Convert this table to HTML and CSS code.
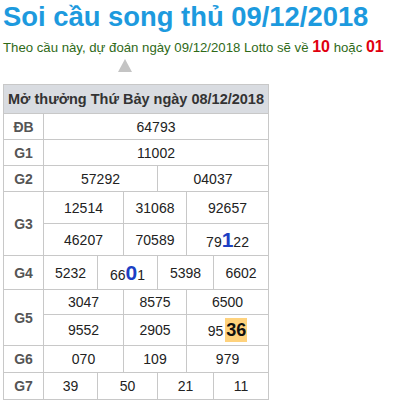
FILE: index.html
```html
<!DOCTYPE html>
<html lang="vi">
<head>
<meta charset="utf-8">
<title>Soi cầu song thủ 09/12/2018</title>
<link rel="stylesheet" href="styles.css">
</head>
<body>
<div class="page">
  <h1 class="title">Soi cầu song thủ 09/12/2018</h1>
  <p class="lead">Theo cầu này, dự đoán ngày 09/12/2018 Lotto sẽ về <b class="hot">10</b> hoặc <b class="hot">01</b></p>
  <div class="pointer"></div>
  <table class="kq">
    <colgroup>
      <col class="c0"><col class="c1"><col class="c2"><col class="c3"><col class="c4"><col class="c5"><col class="c6">
    </colgroup>
    <tr class="head"><th colspan="7">Mở thưởng Thứ Bảy ngày 08/12/2018</th></tr>
    <tr class="r"><td class="lb">ĐB</td><td colspan="6">64793</td></tr>
    <tr class="r"><td class="lb">G1</td><td colspan="6">11002</td></tr>
    <tr class="r"><td class="lb">G2</td><td colspan="3">57292</td><td colspan="3">04037</td></tr>
    <tr class="rb"><td class="lb" rowspan="2">G3</td><td colspan="2">12514</td><td colspan="2">31068</td><td colspan="2">92657</td></tr>
    <tr class="rb"><td colspan="2">46207</td><td colspan="2">70589</td><td colspan="2">79<span class="big">1</span>22</td></tr>
    <tr class="rg4"><td class="lb">G4</td><td>5232</td><td colspan="2">66<span class="big">0</span>1</td><td colspan="2">5398</td><td>6602</td></tr>
    <tr class="r5a"><td class="lb" rowspan="2">G5</td><td colspan="2">3047</td><td colspan="2">8575</td><td colspan="2">6500</td></tr>
    <tr class="r5b"><td colspan="2">9552</td><td colspan="2">2905</td><td colspan="2">95<span class="mark">36</span></td></tr>
    <tr class="r6"><td class="lb">G6</td><td colspan="2">070</td><td colspan="2">109</td><td colspan="2">979</td></tr>
    <tr class="r6"><td class="lb">G7</td><td>39</td><td colspan="2">50</td><td colspan="2">21</td><td>11</td></tr>
  </table>
</div>
</body>
</html>
```
FILE: styles.css
```css
html, body {
  margin: 0;
  padding: 0;
  background: #fff;
}
.page {
  padding: 0 0 0 3px;
  font-family: "Liberation Sans", Arial, sans-serif;
}
.title {
  margin: 0;
  padding-top: 1px;
  font-size: 27.4px;
  line-height: 32px;
  font-weight: bold;
  color: #1d9ade;
}
.lead {
  margin: 5px 0 0;
  font-size: 13.2px;
  line-height: 18px;
  color: #2f6a18;
}
.hot {
  color: #e0000f;
  font-size: 16px;
}
.pointer {
  width: 0;
  height: 0;
  margin: 2px 0 0 115px;
  border-left: 7px solid transparent;
  border-right: 7px solid transparent;
  border-bottom: 13px solid #c4c4c4;
}
.kq {
  margin-top: 12px;
  border-collapse: collapse;
  table-layout: fixed;
  width: 266px;
  font-size: 14px;
  color: #222;
  box-shadow: 0 1px 0 #b9b9b9;
}
.c0 { width: 40px; }
.c1 { width: 54px; }
.c2 { width: 26px; }
.c3 { width: 34px; }
.c4 { width: 29px; }
.c5 { width: 27px; }
.c6 { width: 55px; }
.kq th, .kq td {
  border: 1px solid #c8c8c8;
  padding: 0;
  text-align: center;
  white-space: nowrap;
}
.kq th {
  background: #d9dce1;
  color: #333;
  font-size: 14.5px;
  font-weight: bold;
  height: 28px;
}
.kq td { height: 25px; }
.kq .rb td { height: 31px; }
.kq .rg4 td { height: 33px; }
.kq .r5a td { height: 24px; }
.kq .r5b td { height: 30px; }
.kq .r6 td { height: 26px; }
.kq td.lb {
  font-weight: bold;
  color: #555;
}
.big {
  color: #1c3fc4;
  font-weight: bold;
  font-size: 21px;
}
.mark {
  display: inline-block;
  background: #ffd27c;
  color: #111;
  font-weight: bold;
  font-size: 18px;
  line-height: 24px;
  padding: 0 1px;
  margin-left: 2px;
}
```
